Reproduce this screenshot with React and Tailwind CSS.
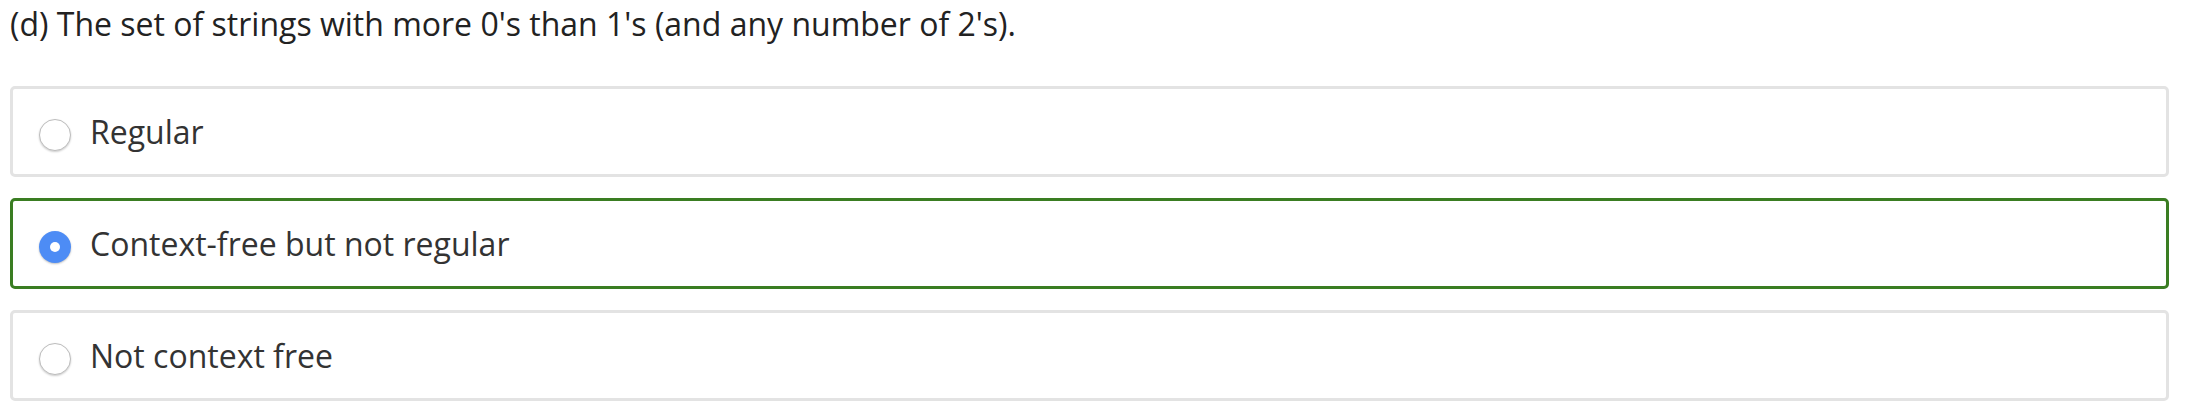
import React from 'react';

const options = [
    { label: 'Regular', selected: false },
    { label: 'Context-free but not regular', selected: true },
    { label: 'Not context free', selected: false },
];

const Radio = ({ selected }) => {
    if (selected) {
        return (
            <span className="mt-[7px] flex h-[32px] w-[32px] flex-shrink-0 items-center justify-center rounded-full bg-[#4d8cf5] shadow-[0_1px_2px_rgba(0,0,0,0.25)]">
                <span className="h-[10px] w-[10px] rounded-full bg-white"></span>
            </span>
        );
    }
    return (
        <span className="mt-[7px] block h-[32px] w-[32px] flex-shrink-0 rounded-full border border-[#bdbdbd] bg-white shadow-[0_1px_2px_rgba(0,0,0,0.2)]"></span>
    );
};

export default function App() {
    return (
        <div className="w-[2188px] bg-white px-[10px] pt-[2px] text-[#333333]" style={{ fontFamily: '"Open Sans", sans-serif' }}>
            {/* Question */}
            <p className="text-[32px] leading-[44px] text-[#222222]">
                (d) The set of strings with more 0's than 1's (and any number of 2's).
            </p>

            {/* Answer choices */}
            <div className="mt-[40px] flex w-[2159px] flex-col gap-[21px]">
                {options.map((opt) => (
                    <div
                        key={opt.label}
                        className={`flex h-[91px] items-center gap-[19px] rounded-[5px] border-[3px] pl-[26px] ${opt.selected ? 'border-[#3a7d22]' : 'border-[#e3e3e3]'}`}
                    >
                        <Radio selected={opt.selected} />
                        <span className="text-[32px] leading-[44px]">{opt.label}</span>
                    </div>
                ))}
            </div>
        </div>
    );
}
